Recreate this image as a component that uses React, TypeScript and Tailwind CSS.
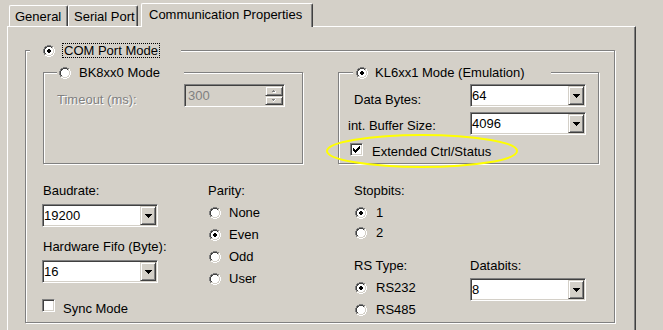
import React from 'react';

const sunken =
  'border border-t-[#808080] border-l-[#808080] border-r-white border-b-white shadow-[inset_1px_1px_0_#404040,inset_-1px_-1px_0_#d4d0c8]';
const raised =
  'border border-t-[#d4d0c8] border-l-[#d4d0c8] border-r-[#404040] border-b-[#404040] shadow-[inset_1px_1px_0_#fff,inset_-1px_-1px_0_#808080]';
const etched = 'border border-[#808080] shadow-[inset_1px_1px_0_#fff,1px_1px_0_#fff]';

// classic 12x12 radio, built pixel by pixel
const radioPixels = (() => {
  const px: { x: number; y: number; c: string }[] = [];
  for (let r = 0; r < 12; r++) {
    for (let c = 0; c < 12; c++) {
      const d = Math.hypot(c - 5.5, r - 5.5);
      if (d > 6) continue;
      const tl = r + c < 11;
      let col = '#fff';
      if (d > 5) col = tl ? '#808080' : '#fff';
      else if (d > 4) col = tl ? '#404040' : '#d4d0c8';
      px.push({ x: c, y: r, c: col });
    }
  }
  return px;
})();

const Radio = ({ checked = false }: { checked?: boolean }) => (
  <svg width="12" height="12" viewBox="0 0 12 12" className="block shrink-0" shapeRendering="crispEdges">
    {radioPixels.map((p) => (
      <rect key={`${p.x}-${p.y}`} x={p.x} y={p.y} width="1" height="1" fill={p.c} />
    ))}
    {checked && <path d="M5 4h2v1H5z M4 5h4v2H4z M5 7h2v1H5z" fill="#000" />}
  </svg>
);

const Checkbox = ({ checked = false }: { checked?: boolean }) => (
  <div className={`h-[13px] w-[13px] shrink-0 bg-white p-[1px] ${sunken}`}>
    {checked && (
      <svg width="7" height="7" viewBox="0 0 7 7" className="m-[1px] block" shapeRendering="crispEdges">
        <path
          d="M6 0h1v1h-1z M5 1h2v1h-2z M0 2h1v1h-1z M4 2h3v1h-3z M0 3h2v1h-2z M3 3h3v1h-3z M0 4h5v1h-5z M1 5h3v1h-3z M2 6h1v1h-1z"
          fill="#000"
        />
      </svg>
    )}
  </div>
);

const Combo = ({ value }: { value: string }) => (
  <div className={`flex h-[23px] w-[116px] shrink-0 bg-white p-[1px] ${sunken}`}>
    <div className="flex-1 leading-[19px]">{value}</div>
    <div className={`flex h-full w-[16px] items-center justify-center bg-[#d4d0c8] ${raised}`}>
      <svg width="7" height="4" viewBox="0 0 7 4" shapeRendering="crispEdges" className="block">
        <path d="M0 0h7v1H0z M1 1h5v1H1z M2 2h3v1H2z M3 3h1v1H3z" fill="#000" />
      </svg>
    </div>
  </div>
);

const SpinArrow = ({ up }: { up?: boolean }) => (
  <svg width="4" height="3" viewBox="0 0 4 3" shapeRendering="crispEdges" className="block">
    <path d={up ? 'M1 0h1v1H1z M0 1h3v1H0z' : 'M0 0h3v1H0z M1 1h1v1H1z'} fill="#808080" />
    <path d={up ? 'M3 1h1v1H3z M1 2h3v1H1z' : 'M3 0h1v1H3z M2 1h1v1H2z M1 2h1v1H1z'} fill="#fff" />
  </svg>
);

const Tab = ({ label, className }: { label: string; className: string }) => (
  <div
    className={`h-[21px] whitespace-nowrap rounded-t-[2px] border-t border-l border-r border-white border-r-[#404040] pl-[5px] pt-[3px] shadow-[inset_-1px_0_0_#808080] ${className}`}
  >
    {label}
  </div>
);

const RadioRow = ({ label, checked, gap }: { label: string; checked?: boolean; gap: string }) => (
  <div className={`flex h-[15px] items-center pl-[1px] ${gap}`}>
    <Radio checked={checked} />
    <span>{label}</span>
  </div>
);

export default function App() {
  return (
    <div className="relative h-[330px] w-[663px] overflow-hidden bg-[#d4d0c8] font-['Liberation_Sans',Arial,sans-serif] text-[13px] leading-[15px] text-black">
      {/* tab strip */}
      <div className="flex h-[26px] items-end pl-[9px]">
        <Tab label="General" className="w-[59px]" />
        <Tab label="Serial Port" className="w-[70px]" />
        <div className="relative z-10 mb-[-1px] ml-[3px] h-[24px] w-[172px] whitespace-nowrap rounded-t-[2px] border-t border-l border-r border-white border-r-[#404040] bg-[#d4d0c8] pl-[7px] pt-[3px] shadow-[inset_-1px_0_0_#808080]">
          Communication Properties
        </div>
      </div>

      {/* tab page */}
      <div className="ml-[7px] h-[304px] w-[629px] border-t border-l border-r border-white border-r-[#404040] pl-[17px] pt-[23px] shadow-[inset_-1px_0_0_#808080]">
        <div className={`relative h-[273px] w-[590px] pl-[17px] pt-[21px] ${etched}`}>
          <div className="absolute left-[4px] top-[-8px] flex h-[15px] w-[151px] items-center gap-[7px] bg-[#d4d0c8] pl-[13px]">
            <Radio checked />
            <span className="border border-dotted border-black px-[1px] leading-[13px]">COM Port Mode</span>
          </div>

          <div className="flex gap-[35px]">
            {/* BK8xx0 */}
            <div className={`relative h-[92px] w-[260px] pl-[13px] pt-[11px] ${etched}`}>
              <div className="absolute left-[13px] top-[-8px] flex h-[15px] w-[127px] items-center gap-[8px] bg-[#d4d0c8] pl-[2px]">
                <Radio />
                <span>BK8xx0 Mode</span>
              </div>
              <div className="flex">
                <div className="mt-[8px] w-[127px] text-[#808080] [text-shadow:1px_1px_0_#fff]">Timeout (ms):</div>
                <div className={`flex h-[23px] w-[101px] bg-[#d4d0c8] p-[1px] ${sunken}`}>
                  <div className="flex-1 pl-[2px] leading-[19px] text-[#808080]">300</div>
                  <div className="flex w-[18px] flex-col">
                    <div className={`flex h-[10px] items-center justify-center ${raised}`}>
                      <SpinArrow up />
                    </div>
                    <div className={`flex h-[9px] items-center justify-center ${raised}`}>
                      <SpinArrow />
                    </div>
                  </div>
                </div>
              </div>
            </div>

            {/* KL6xx1 */}
            <div className={`relative h-[92px] w-[261px] pt-[11px] ${etched}`}>
              <div className="absolute left-[14px] top-[-8px] flex h-[15px] w-[198px] items-center gap-[7px] bg-[#d4d0c8] pl-[3px]">
                <Radio checked />
                <span>KL6xx1 Mode (Emulation)</span>
              </div>
              <div className="flex">
                <div className="ml-[15px] mt-[8px] w-[116px]">Data Bytes:</div>
                <Combo value="64" />
              </div>
              <div className="mt-[5px] flex">
                <div className="ml-[9px] mt-[6px] w-[122px]">int. Buffer Size:</div>
                <Combo value="4096" />
              </div>
              <div className="mt-[8px] flex">
                <div className="ml-[11px]">
                  <Checkbox checked />
                </div>
                <span className="ml-[9px] mt-[1px]">Extended Ctrl/Status</span>
              </div>
            </div>
          </div>

          {/* serial settings */}
          <div className="ml-[-1px] flex">
            <div className="w-[166px]">
              <div className="ml-[1px] mt-[19px]">Baudrate:</div>
              <div className="mt-[6px]">
                <Combo value="19200" />
              </div>
              <div className="ml-[1px] mt-[12px]">Hardware Fifo (Byte):</div>
              <div className="mt-[6px]">
                <Combo value="16" />
              </div>
              <div className="mt-[16px] flex">
                <Checkbox />
                <span className="ml-[8px] mt-[2px]">Sync Mode</span>
              </div>
            </div>

            <div className="w-[146px]">
              <div className="mt-[19px]">Parity:</div>
              <div className="mt-[7px] flex flex-col gap-[7px]">
                <RadioRow label="None" gap="gap-[8px]" />
                <RadioRow label="Even" checked gap="gap-[8px]" />
                <RadioRow label="Odd" gap="gap-[8px]" />
                <RadioRow label="User" gap="gap-[8px]" />
              </div>
            </div>

            <div className="w-[116px]">
              <div className="mt-[19px]">Stopbits:</div>
              <div className="mt-[7px] flex flex-col gap-[5px]">
                <RadioRow label="1" checked gap="gap-[9px]" />
                <RadioRow label="2" gap="gap-[9px]" />
              </div>
              <div className="mt-[18px]">RS Type:</div>
              <div className="mt-[7px] flex flex-col gap-[7px]">
                <RadioRow label="RS232" checked gap="gap-[9px]" />
                <RadioRow label="RS485" gap="gap-[9px]" />
              </div>
            </div>

            <div>
              <div className="mt-[94px]">Databits:</div>
              <div className="mt-[5px]">
                <Combo value="8" />
              </div>
            </div>
          </div>
        </div>
      </div>

      {/* highlight */}
      <svg width="200" height="42" viewBox="0 0 200 42" className="absolute left-[325px] top-[130px]">
        <ellipse cx="97" cy="21" rx="95" ry="16" fill="none" stroke="#ffff00" strokeWidth="2" />
      </svg>
    </div>
  );
}
